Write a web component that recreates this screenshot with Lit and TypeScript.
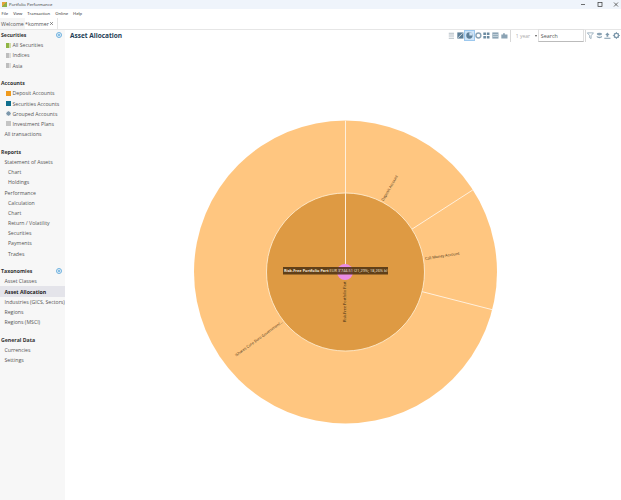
import { LitElement, html, css, svg } from "lit";
import { customElement } from "lit/decorators.js";

type Row = { label: string; indent?: number; icon?: string; active?: boolean };
type Section = { title: string; plus?: boolean; rows: Row[] };

const SECTIONS: Section[] = [
  { title: "Securities", plus: true, rows: [
    { label: "All Securities", icon: "green" },
    { label: "Indices", icon: "gray" },
    { label: "Asia", icon: "gray" },
  ]},
  { title: "Accounts", rows: [
    { label: "Deposit Accounts", icon: "orange" },
    { label: "Securities Accounts", icon: "teal" },
    { label: "Grouped Accounts", icon: "group" },
    { label: "Investment Plans", icon: "plan" },
    { label: "All transactions" },
  ]},
  { title: "Reports", rows: [
    { label: "Statement of Assets", indent: 1 },
    { label: "Chart", indent: 2 },
    { label: "Holdings", indent: 2 },
    { label: "Performance", indent: 1 },
    { label: "Calculation", indent: 2 },
    { label: "Chart", indent: 2 },
    { label: "Return / Volatility", indent: 2 },
    { label: "Securities", indent: 2 },
    { label: "Payments", indent: 2 },
    { label: "Trades", indent: 2 },
  ]},
  { title: "Taxonomies", plus: true, rows: [
    { label: "Asset Classes", indent: 1 },
    { label: "Asset Allocation", indent: 1, active: true },
    { label: "Industries (GICS, Sectors)", indent: 1 },
    { label: "Regions", indent: 1 },
    { label: "Regions (MSCI)", indent: 1 },
  ]},
  { title: "General Data", rows: [
    { label: "Currencies", indent: 1 },
    { label: "Settings", indent: 1 },
  ]},
];

const CX = 345.5, CY = 272, R1 = 79, R2 = 151.5;

function polar(r: number, deg: number): [number, number] {
  const a = (deg * Math.PI) / 180;
  return [CX + r * Math.sin(a), CY - r * Math.cos(a)];
}
function line(deg: number) {
  const [x1, y1] = polar(R1, deg);
  const [x2, y2] = polar(R2, deg);
  return svg`<line class="sep" x1=${x1} y1=${y1} x2=${x2} y2=${y2}></line>`;
}

const TOOL_LEFT = [
  svg`<path d="M2 2h6v1H2zM2 4h6v1H2zM2 6h6v1H2zM2 8h6v1H2z" fill="#b4bec5"/>`,
  svg`<rect x="1.5" y="1.5" width="7" height="7" fill="#5e7f97"/><path d="M2.5 7.5L7.5 2.5" stroke="#dfe8ee" stroke-width="1"/>`,
  svg`<circle cx="5" cy="5" r="3.6" fill="#5e7f97"/><path d="M5 5V1.4A3.6 3.6 0 0 1 8.6 5z" fill="#cfe3f5"/>`,
  svg`<circle cx="5" cy="5" r="2.8" fill="none" stroke="#8ba3b4" stroke-width="1.6"/>`,
  svg`<path d="M1.5 1.5h3v3h-3zM5.5 1.5h3v3h-3zM1.5 5.5h3v3h-3zM5.5 5.5h3v3h-3z" fill="#6b8aa0"/>`,
  svg`<rect x="1.5" y="1.5" width="7" height="7" fill="#8ba3b4"/><path d="M2 4h6M2 6h6" stroke="#dfe8ee" stroke-width=".8"/>`,
  svg`<path d="M1.5 8.5V4h2V2.5h2V4h3v4.5z" fill="#8ba3b4"/>`,
];
const TOOL_RIGHT = [
  svg`<path d="M1.5 2h7L5.8 5.2V8.5L4.2 7.6V5.2z" fill="none" stroke="#8ba3b4" stroke-width=".9"/>`,
  svg`<ellipse cx="5" cy="3.4" rx="3" ry="1.5" fill="#8ba3b4"/><path d="M2 5.2c1 1.6 5 1.6 6 0v1.6c-1 1.6-5 1.6-6 0z" fill="#8ba3b4"/>`,
  svg`<path d="M5 1.5L7.5 4.5H6V6.5H4V4.5H2.5zM1.5 7.5h7v1.2h-7z" fill="#7d98ab"/>`,
  svg`<circle cx="5" cy="5" r="2.4" fill="none" stroke="#7d98ab" stroke-width="1.5"/><path d="M5 1v1.2M5 7.8V9M1 5h1.2M7.8 5H9M2.2 2.2l.8.8M7 7l.8.8M7.8 2.2l-.8.8M3 7l-.8.8" stroke="#7d98ab" stroke-width="1"/>`,
];

@customElement("app-root")
export class AppRoot extends LitElement {
  static styles = css`
    :host {
      display: flex;
      flex-direction: column;
      width: 621px;
      height: 500px;
      overflow: hidden;
      background: #fff;
      font-family: "Open Sans", "Noto Sans", sans-serif;
      font-size: 5.2px;
      color: #444;
    }
    .titlebar {
      height: 9px;
      flex: none;
      background: #eff4fb;
      display: flex;
      align-items: center;
      padding-left: 2px;
      gap: 2px;
      color: #333;
      font-size: 4.2px;
    }
    .logo { width: 5px; height: 5px; background: linear-gradient(135deg, #e5a33b 50%, #8fb04a 50%); }
    .spacer { flex: 1; }
    .winbtns { display: flex; gap: 6.5px; }
    .winbtns svg { width: 10px; height: 9px; display: block; }
    .menubar {
      height: 9px;
      flex: none;
      display: flex;
      align-items: center;
      gap: 5px;
      padding-left: 1.5px;
      color: #222;
      background: #fff;
      font-size: 4.2px;
    }
    .tabs {
      height: 11px;
      flex: none;
      display: flex;
      align-items: stretch;
      background: #fff;
      border-bottom: 1px solid #e6e6e6;
      box-sizing: content-box;
    }
    .tab {
      display: flex;
      align-items: center;
      font-size: 5.3px;
      color: #555;
      padding: 0 1px;
      background: #f5f5f5;
      width: 25px;
      box-sizing: border-box;
    }
    .tab.current {
      background: #fff;
      padding: 0 3px 0 0;
      width: 33px;
      justify-content: space-between;
      border-right: 1px solid #e6e6e6;
    }
    .main { flex: 1; display: flex; min-height: 0; }
    .side {
      width: 65px;
      flex: none;
      background: #f7f7f7;
      box-sizing: border-box;
      white-space: nowrap;
      overflow: hidden;
    }
    .section { margin-bottom: 7.4px; }
    .head {
      height: 10.2px;
      display: flex;
      align-items: center;
      justify-content: space-between;
      padding: 0 3px 0 1px;
      font-weight: 700;
      color: #333;
    }
    .plus { width: 6px; height: 6px; display: block; }
    .row {
      height: 10.2px;
      display: flex;
      align-items: center;
      gap: 2px;
      padding-left: 4.5px;
      color: #555;
    }
    .row.with-ico { padding-left: 5.5px; }
    .row.i2 { padding-left: 8px; }
    .row.active { background: #e4e4ea; color: #222; font-weight: 700; }
    .ico { width: 5px; height: 5px; flex: none; }
    .ico.green { background: linear-gradient(90deg, #8fb545 60%, #cfdca8 60%); }
    .ico.gray { background: linear-gradient(90deg, #bdbdbd 60%, #dcdcdc 60%); }
    .ico.orange { background: #ef9a1d; }
    .ico.teal { background: #0f6f8e; }
    .ico.group { background: radial-gradient(circle, #7d97ab 55%, #c9d4dc 60%); border-radius: 50%; }
    .ico.plan { background: #c4c4c4; }
    .content { flex: 1; display: flex; flex-direction: column; min-width: 0; position: relative; }
    .top {
      height: 13px;
      margin-top: -1px;
      flex: none;
      display: flex;
      align-items: center;
      padding: 0 0 0 5px;
      position: relative;
      z-index: 1;
    }
    .title { font-size: 6.5px; font-weight: 700; color: #1d3c55; flex: 1; margin-top: -1px; }
    .tool { width: 8.8px; height: 9px; display: block; flex: none; }
    .tool.on { background: #cfe5f8; outline: 0.5px solid #9cc8ee; }
    .vsep { width: 1px; height: 12px; background: #d8d8d8; margin: 0 0 0 1px; }
    .range { color: #aaa; width: 19px; margin-left: 5px; font-size: 5px; }
    .arrow { width: 0; height: 0; border: 1.5px solid transparent; border-top: 2px solid #555; margin: 1px 1px 0 0; }
    .search {
      width: 46px;
      height: 13px;
      box-sizing: border-box;
      border: 1px solid #e0e0e0;
      border-bottom-color: #bbb;
      display: flex;
      align-items: center;
      padding-left: 2px;
      color: #555;
      font-size: 5.4px;
      background: #fff;
    }
    .tools-right { display: flex; align-items: center; }
    .chart { position: absolute; left: -65px; top: -30px; width: 621px; height: 500px; pointer-events: none; }
    .outer { fill: #ffc680; }
    .inner { fill: #de9a43; stroke: #fff2dc; stroke-width: 0.8; }
    .sep { stroke: #fff0dc; stroke-width: 1; }
    .lbl { font-family: "Open Sans", sans-serif; font-size: 3.8px; fill: #3d2c14; }
    .tip-bg { fill: #4a2f10; fill-opacity: 0.85; }
    .tip { font-family: "Open Sans", sans-serif; font-size: 3.85px; fill: #f6ead8; }
    .tip-b { font-weight: 700; }
  `;

  private rowTpl(r: Row) {
    const cls = `row ${r.indent === 2 ? "i2" : ""} ${r.active ? "active" : ""} ${r.icon ? "with-ico" : ""}`;
    return html`<div class=${cls}>${r.icon ? html`<span class="ico ${r.icon}"></span>` : null}<span>${r.label}</span></div>`;
  }

  render() {
    return html`
      <div class="titlebar">
        <span class="logo"></span><span>Portfolio Performance</span><span class="spacer"></span>
        <div class="winbtns">
          <svg viewBox="0 0 10 9"><path d="M3 4.5h4" stroke="#333" stroke-width=".7"/></svg>
          <svg viewBox="0 0 10 9"><rect x="3" y="2.5" width="4" height="4" fill="none" stroke="#333" stroke-width=".7"/></svg>
          <svg viewBox="0 0 10 9"><path d="M3 2.5l4 4M7 2.5l-4 4" stroke="#333" stroke-width=".7"/></svg>
        </div>
      </div>
      <div class="menubar">
        <span>File</span><span>View</span><span>Transaction</span><span>Online</span><span>Help</span>
      </div>
      <div class="tabs">
        <div class="tab">Welcome</div>
        <div class="tab current"><span>*kommer</span>
          <svg width="5" height="5" viewBox="0 0 5 5"><path d="M1 1l3 3M4 1L1 4" stroke="#555" stroke-width=".6"/></svg>
        </div>
      </div>
      <div class="main">
        <nav class="side">
          ${SECTIONS.map(s => html`
            <div class="section">
              <div class="head"><span>${s.title}</span>${s.plus ? html`
                <svg class="plus" viewBox="0 0 6 6"><circle cx="3" cy="3" r="2.5" fill="#fff" stroke="#2f8fd0" stroke-width=".7"/><path d="M1.6 3h2.8M3 1.6v2.8" stroke="#2f8fd0" stroke-width=".7"/></svg>` : null}</div>
              ${s.rows.map(r => this.rowTpl(r))}
            </div>`)}
        </nav>
        <section class="content">
          <svg class="chart" viewBox="0 0 621 500" role="img" aria-label="Asset allocation sunburst">
            <circle class="outer" cx=${CX} cy=${CY} r=${R2}></circle>
            ${line(0)}${line(57.2)}${line(104.4)}
            <circle class="inner" cx=${CX} cy=${CY} r=${R1}></circle>
            <line class="sep" x1=${CX} y1=${CY - R1} x2=${CX} y2=${CY}></line>
            <text class="lbl" transform="translate(382.7 200.7) rotate(-60)" dominant-baseline="middle">Deposit Account</text>
            <text class="lbl" transform="translate(425 259) rotate(-9)" dominant-baseline="middle">Call Money Account</text>
            <text class="lbl" transform="translate(235.7 355.7) rotate(-36)" dominant-baseline="middle">iShares Core Euro Government...</text>
            <text class="lbl" transform="translate(345 322) rotate(-90)" dominant-baseline="middle">Risk-Free Portfolio Part</text>
            <circle cx="345" cy="272" r="8" fill="#ea8ce4"></circle>
            <rect class="tip-bg" x="283" y="267" width="105" height="7.5"></rect>
            <text class="tip" x="284" y="272.3"><tspan class="tip-b">Risk-Free Portfolio Part</tspan> EUR 3'744.51 (21,29%; 18,26% b)</text>
          </svg>
          <div class="top">
            <div class="title">Asset Allocation</div>
            ${TOOL_LEFT.map((t, i) => html`<svg class="tool ${i === 2 ? "on" : ""}" viewBox="0 0 10 10">${t}</svg>`)}
            <span class="vsep"></span>
            <span class="range">1 year</span><span class="arrow"></span>
            <div class="search">Search</div>
            <span class="vsep"></span>
            <div class="tools-right">
              ${TOOL_RIGHT.map(t => html`<svg class="tool" viewBox="0 0 10 10">${t}</svg>`)}
            </div>
          </div>
        </section>
      </div>
    `;
  }
}
